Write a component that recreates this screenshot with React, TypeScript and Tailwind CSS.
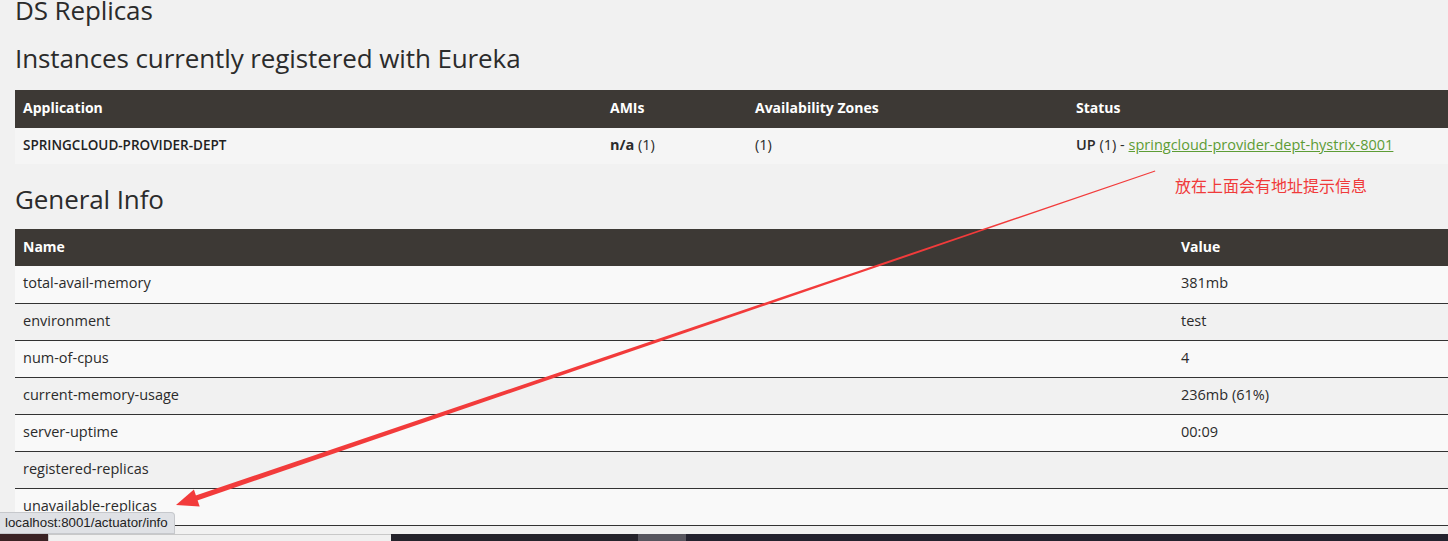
import React from "react";

const heading = "text-[26px] leading-[24px] h-[24px] text-[#2b2b2b] font-medium whitespace-nowrap tracking-[-0.1px]";

export default function App() {
  const info: [string, string][] = [
    ["total-avail-memory", "381mb"],
    ["environment", "test"],
    ["num-of-cpus", "4"],
    ["current-memory-usage", "236mb (61%)"],
    ["server-uptime", "00:09"],
    ["registered-replicas", ""],
    ["unavailable-replicas", ""],
  ];
  return (
    <div
      className="relative h-[541px] w-[1448px] overflow-hidden bg-[#f1f1f1]"
      style={{ fontFamily: '"Open Sans", "Noto Sans", sans-serif' }}
    >
      <div className="flex flex-col pl-[15px]">
        <h1 className="h-[20px] whitespace-nowrap text-[26px] font-medium leading-[20px] tracking-[-0.1px] text-[#2b2b2b]">
          DS Replicas
        </h1>
        <h1 className={`${heading} mt-[26px]`}>Instances currently registered with Eureka</h1>
        <table className="mt-[20px] w-full table-fixed border-collapse text-[14.5px] text-[#2b2b2b]">
          <thead>
            <tr className="h-[38px] bg-[#3d3935] text-left text-[14px] text-white">
              <th className="w-[587px] pb-[4px] pl-[8px] font-bold">Application</th>
              <th className="w-[145px] pb-[4px] pl-[8px] font-bold">AMIs</th>
              <th className="w-[321px] pb-[4px] pl-[8px] font-bold">Availability Zones</th>
              <th className="pb-[4px] pl-[8px] font-bold">Status</th>
            </tr>
          </thead>
          <tbody>
            <tr className="h-[36px] bg-[#f5f5f5]">
              <td className="pb-[2px] pl-[8px] text-[13.5px] font-semibold text-[#222]">SPRINGCLOUD-PROVIDER-DEPT</td>
              <td className="pb-[2px] pl-[8px]">
                <b>n/a</b> (1)
              </td>
              <td className="pb-[2px] pl-[8px]">(1)</td>
              <td className="whitespace-nowrap pb-[2px] pl-[8px]">
                <b className="font-semibold">UP</b> (1) -{" "}
                <a className="text-[#5d9c35] underline">springcloud-provider-dept-hystrix-8001</a>
              </td>
            </tr>
          </tbody>
        </table>
        <h1 className={`${heading} mt-[23px]`}>General Info</h1>
        <table className="mt-[18px] w-full table-fixed border-collapse text-[14.5px] text-[#2b2b2b]">
          <thead>
            <tr className="h-[37px] bg-[#3d3935] text-left text-[14px] text-white">
              <th className="w-[1158px] pb-[3px] pl-[8px] font-bold">Name</th>
              <th className="pb-[3px] pl-[8px] font-bold">Value</th>
            </tr>
          </thead>
          <tbody>
            {info.map(([k, v], i) => (
              <tr
                key={k}
                className={`h-[37px] border-b border-[#333333] ${i % 2 === 0 ? "bg-[#f9f9f9]" : "bg-[#f1f1f1]"}`}
              >
                <td className="pb-[2px] pl-[8px]">{k}</td>
                <td className="pb-[2px] pl-[8px]">{v}</td>
              </tr>
            ))}
          </tbody>
        </table>
      </div>

      {/* annotation */}
      <div
        className="absolute left-[1175px] top-[175px] text-[16px] leading-[20px] text-[#f03a3a]"
        style={{ fontFamily: '"Noto Sans CJK SC", sans-serif' }}
      >
        放在上面会有地址提示信息
      </div>
      <svg className="pointer-events-none absolute left-0 top-0" width="1448" height="541" viewBox="0 0 1448 541">
        <polygon points="1155,170.6 1155.3,171.4 195.8,501 194.2,496" fill="#f23b3b" />
        <polygon points="176,505 199.7,506.4 193.9,489.4" fill="#f23b3b" />
      </svg>

      {/* status tooltip */}
      <div
        className="absolute left-0 top-[512px] flex h-[22px] w-[175px] items-center rounded-tr-[4px] border border-l-0 border-[#c6c8cc] bg-[#dfe1e5] pl-[5px] text-[13.3px] text-[#222]"
        style={{ fontFamily: '"Liberation Sans", sans-serif' }}
      >
        localhost:8001/actuator/info
      </div>

      {/* bottom strip */}
      <div className="absolute bottom-0 left-0 flex h-[7px] w-full">
        <div className="w-[48px] bg-[#3a2224]" />
        <div className="w-[343px] border-l border-t border-[#c8c8c8] bg-[#f0f0f0]" />
        <div className="w-[247px] bg-[#24232b]" />
        <div className="w-[48px] bg-[#56555e]" />
        <div className="flex-1 bg-[#23222e]" />
      </div>
    </div>
  );
}
